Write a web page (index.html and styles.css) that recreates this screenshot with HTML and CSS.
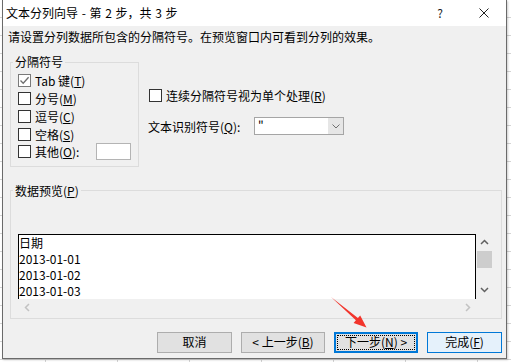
FILE: index.html
```html
<!DOCTYPE html>
<html lang="zh-CN">
<head>
<meta charset="utf-8">
<title>文本分列向导</title>
<link rel="stylesheet" href="styles.css">
</head>
<body>
<div class="dialog">
  <div class="titlebar">
    <span class="title">文本分列向导 - 第 2 步，共 3 步</span>
    <span class="tb-btn help">?</span>
    <span class="tb-btn close"><svg width="10" height="10" viewBox="0 0 10 10"><path d="M0.5 0.5 L9.5 9.5 M9.5 0.5 L0.5 9.5" stroke="#222" stroke-width="1" fill="none"/></svg></span>
  </div>
  <div class="content">
    <p class="intro">请设置分列数据所包含的分隔符号。在预览窗口内可看到分列的效果。</p>
    <div class="top-row">
      <fieldset class="group delims">
        <legend>分隔符号</legend>
        <div class="check-row"><span class="box checked"><svg width="11" height="11" viewBox="0 0 11 11"><path d="M1.5 5.5 L4.2 8.3 L9.6 2.2" stroke="#6e6e6e" stroke-width="1.3" fill="none"/></svg></span>Tab 键(<u>T</u>)</div>
        <div class="check-row"><span class="box"></span>分号(<u>M</u>)</div>
        <div class="check-row"><span class="box"></span>逗号(<u>C</u>)</div>
        <div class="check-row"><span class="box"></span>空格(<u>S</u>)</div>
        <div class="check-row"><span class="box"></span>其他(<u>O</u>):<span class="other-input"></span></div>
      </fieldset>
      <div class="options">
        <div class="check-row single"><span class="box"></span>连续分隔符号视为单个处理(<u>R</u>)</div>
        <div class="qualifier">
          <span class="q-label">文本识别符号(<u>Q</u>):</span>
          <span class="combo">
            <span class="combo-value">"</span>
            <span class="combo-btn"><svg width="8" height="5" viewBox="0 0 8 5"><path d="M0.5 0.5 L4 4 L7.5 0.5" stroke="#707070" stroke-width="1" fill="none"/></svg></span>
          </span>
        </div>
      </div>
    </div>
    <fieldset class="group preview">
      <legend>数据预览(<u>P</u>)</legend>
      <div class="preview-box">
        <div class="preview-text">日期<br>2013-01-01<br>2013-01-02<br>2013-01-03</div>
        <div class="vscroll">
          <span class="arrow"><svg width="9" height="6" viewBox="0 0 9 6"><path d="M1 5 L4.5 1.5 L8 5" stroke="#606060" stroke-width="1.5" fill="none"/></svg></span>
          <span class="thumb"></span>
          <span class="spacer"></span>
          <span class="arrow"><svg width="9" height="6" viewBox="0 0 9 6"><path d="M1 1 L4.5 4.5 L8 1" stroke="#606060" stroke-width="1.5" fill="none"/></svg></span>
        </div>
        <div class="hscroll">
          <span class="arrow"><svg width="6" height="9" viewBox="0 0 6 9"><path d="M5 1 L1.5 4.5 L5 8" stroke="#c2c2c2" stroke-width="1.5" fill="none"/></svg></span>
          <span class="arrow"><svg width="6" height="9" viewBox="0 0 6 9"><path d="M1 1 L4.5 4.5 L1 8" stroke="#c2c2c2" stroke-width="1.5" fill="none"/></svg></span>
        </div>
        <div class="corner"></div>
      </div>
    </fieldset>
    <div class="buttons">
      <div class="btn btn-sm">取消</div>
      <div class="btn btn-lg">&lt; 上一步(<u>B</u>)</div>
      <div class="btn btn-lg btn-default">下一步(<u>N</u>) &gt;</div>
      <div class="btn btn-sm btn-accent">完成(<u>F</u>)</div>
    </div>
  </div>
</div>
<svg class="annotation" width="511" height="362" viewBox="0 0 511 362">
  <polygon points="331,297 357.9,318.1 360.2,315.4 366.5,327.5 353.6,323 355.9,320.3" fill="#f2352c"/>
</svg>
</body>
</html>
```
FILE: styles.css
```css
html, body {
  margin: 0;
}

body {
  width: 511px;
  height: 362px;
  overflow: hidden;
  position: relative;
  background-color: #fff;
  background-image:
    repeating-linear-gradient(90deg, transparent 0 45px, #d4d4d4 45px 46px, transparent 46px 72px),
    repeating-linear-gradient(180deg, transparent 0 17px, #d4d4d4 17px 18px);
  font-family: "Noto Sans CJK SC", sans-serif;
  font-size: 12px;
  color: #000;
}

.dialog {
  margin-left: 2px;
  width: 505px;
  height: 359px;
  box-sizing: border-box;
  border: 1px solid #6a6a6a;
  border-top: none;
  background: #f0f0f0;
  display: flex;
  flex-direction: column;
  box-shadow: 1px 1px 2px rgba(0, 0, 0, 0.2);
}

.titlebar {
  height: 26px;
  flex: none;
  background: #fff;
  display: flex;
  align-items: center;
  padding-left: 3px;
  line-height: 16px;
  color: #000;
}

.title {
  flex: 1;
  word-spacing: 1px;
}

.tb-btn {
  width: 44px;
  height: 26px;
  display: flex;
  align-items: center;
  justify-content: center;
}

.help {
  font-size: 12px;
  color: #222;
}

.content {
  flex: 1;
  padding: 0 4px 0 7px;
  display: flex;
  flex-direction: column;
}

.intro {
  margin: 3px 0 10px -2px;
  line-height: 16px;
}

.top-row {
  display: flex;
  align-items: flex-start;
}

.group {
  margin: 0;
  border: 1px solid #dcdcdc;
  padding: 3px 0 5px 2px;
  min-width: 0;
}

.group legend {
  padding: 0 2px;
  line-height: 14px;
}

.delims {
  width: 129px;
  box-sizing: border-box;
  flex: none;
}

.check-row {
  display: flex;
  align-items: center;
  height: 17.75px;
  margin-left: 5px;
  white-space: nowrap;
}

.box {
  width: 13px;
  height: 13px;
  box-sizing: border-box;
  border: 1px solid #333;
  background: #fff;
  margin-right: 4px;
  flex: none;
  display: flex;
  align-items: center;
  justify-content: center;
}

.box.checked {
  border-color: #7a7a7a;
}

.other-input {
  margin-left: auto;
  margin-right: 7px;
  width: 35px;
  height: 17px;
  box-sizing: border-box;
  border: 1px solid #b4b4b4;
  background: #fff;
}

.options {
  margin-left: 10px;
  padding-top: 31px;
}

.check-row.single {
  margin-left: 0;
  height: 18px;
}

.qualifier {
  display: flex;
  align-items: center;
  margin-top: 13px;
  margin-left: -1px;
}

.q-label {
  width: 106px;
  white-space: nowrap;
}

.combo {
  width: 90px;
  height: 18px;
  box-sizing: border-box;
  border: 1px solid #a5a5a5;
  background: #fff;
  display: flex;
}

.combo-value {
  flex: 1;
  padding-left: 3px;
  line-height: 16px;
}

.combo-btn {
  width: 15px;
  background: #e6e6e6;
  display: flex;
  align-items: center;
  justify-content: center;
}

.preview {
  margin-top: 17px;
  padding: 36px 0 2px 2px;
}

.preview-box {
  margin-left: 5px;
  display: grid;
  grid-template-columns: 458px 17px;
  grid-template-rows: 65px 17px;
}

.preview-text {
  background: #fff;
  border: 1px solid #000;
  border-bottom: none;
  line-height: 16px;
  overflow: hidden;
}

.vscroll {
  display: flex;
  flex-direction: column;
  align-items: center;
}

.arrow {
  width: 17px;
  height: 17px;
  display: flex;
  align-items: center;
  justify-content: center;
  flex: none;
}

.thumb {
  width: 15px;
  height: 17px;
  background: #cdcdcd;
  flex: none;
}

.spacer {
  flex: 1;
}

.hscroll {
  display: flex;
  justify-content: space-between;
}

.buttons {
  display: flex;
  justify-content: flex-end;
  gap: 9px;
  margin-top: 13px;
}

.btn {
  height: 21px;
  box-sizing: border-box;
  border: 1px solid #adadad;
  background: #e1e1e1;
  display: flex;
  align-items: center;
  justify-content: center;
  line-height: 16px;
  position: relative;
  white-space: nowrap;
}

.btn-sm {
  width: 75px;
}

.btn-lg {
  width: 84px;
}

.btn-default {
  border: 2px solid #0078d7;
}

.btn-default::after {
  content: "";
  position: absolute;
  inset: 1px;
  border: 1px dotted #000;
}

.btn-accent {
  border-color: #0078d7;
  background: #e5f1fb;
}

.annotation {
  position: absolute;
  left: 0;
  top: 0;
  pointer-events: none;
}
```
